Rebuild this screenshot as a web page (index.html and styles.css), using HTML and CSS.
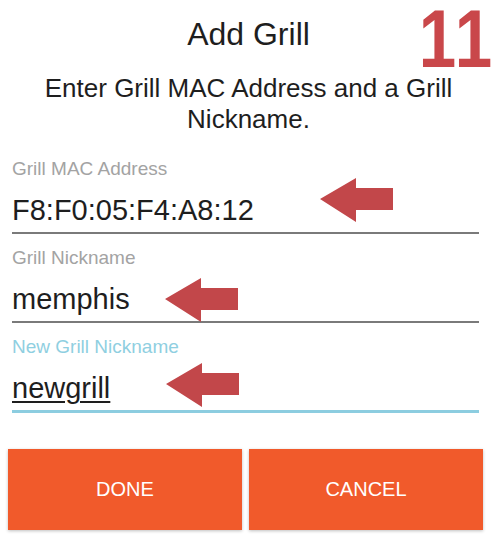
FILE: index.html
```html
<!DOCTYPE html>
<html lang="en">
<head>
    <meta charset="UTF-8">
    <meta name="viewport" content="width=device-width, initial-scale=1.0">
    <title>Add Grill</title>
    <link rel="stylesheet" href="styles.css">
</head>
<body>

    <div class="screen">
        <!-- Step number -->
        <div class="step">11</div>

        <h1 class="title">Add Grill</h1>
        <p class="subtitle">Enter Grill MAC Address and a Grill Nickname.</p>

        <div class="field field-first">
            <div class="label">Grill MAC Address</div>
            <div class="value">F8:F0:05:F4:A8:12</div>
            <svg class="arrow arrow-mac" width="73" height="44" viewBox="0 0 73 44">
                <polygon points="0,21 36,0 36,10 73,10 73,32 36,32 36,44"></polygon>
            </svg>
        </div>

        <div class="field">
            <div class="label">Grill Nickname</div>
            <div class="value">memphis</div>
            <svg class="arrow arrow-nick" width="73" height="44" viewBox="0 0 73 44">
                <polygon points="0,21 36,0 36,10 73,10 73,32 36,32 36,44"></polygon>
            </svg>
        </div>

        <div class="field active">
            <div class="label">New Grill Nickname</div>
            <div class="value"><span class="typed">newgrill</span></div>
            <svg class="arrow arrow-new" width="73" height="44" viewBox="0 0 73 44">
                <polygon points="0,21 36,0 36,10 73,10 73,32 36,32 36,44"></polygon>
            </svg>
        </div>

        <div class="buttons">
            <button class="btn">DONE</button>
            <button class="btn">CANCEL</button>
        </div>
    </div>

</body>
</html>
```

FILE: styles.css
```css
body {
    margin: 0;
    padding: 0;
    background: #fff;
    font-family: 'Liberation Sans', Arial, sans-serif;
    color: #1e1e1e;
}

.screen {
    position: relative;
    width: 497px;
    height: 550px;
    overflow: hidden;
}

/* Big step number in the corner */
.step {
    position: absolute;
    top: 0;
    right: 2px;
    font-size: 82px;
    line-height: 77px;
    font-weight: bold;
    letter-spacing: 3px;
    color: #c9474a;
    transform: scaleX(0.82);
    transform-origin: right top;
}

.title {
    margin: 15px 0 0;
    font-size: 32px;
    line-height: 38px;
    font-weight: normal;
    text-align: center;
}

.subtitle {
    margin: 20px 0 0;
    padding: 0 30px;
    font-size: 26px;
    line-height: 31px;
    text-align: center;
}

/* Input fields */
.field {
    position: relative;
    margin: 13px 18px 0 12px;
    padding-bottom: 4px;
    border-bottom: 2px solid #7a7a7a;
}

.field-first {
    margin-top: 23px;
}

.label {
    font-size: 19px;
    line-height: 22px;
    color: #a3a3a3;
}

.value {
    margin-top: 12px;
    font-size: 29px;
    line-height: 36px;
    color: #1e1e1e;
}

.field.active {
    border-bottom: 3px solid #8ccde0;
}

.field.active .label {
    color: #8fcfe1;
}

.typed {
    text-decoration: underline;
    text-decoration-thickness: 2px;
    text-underline-offset: 3px;
}

/* Red pointer arrows */
.arrow {
    position: absolute;
    fill: #c2474a;
}

.arrow-mac {
    top: 20px;
    left: 308px;
}

.arrow-nick {
    top: 31px;
    left: 153px;
}

.arrow-new {
    top: 27px;
    left: 154px;
}

/* Buttons */
.buttons {
    display: flex;
    gap: 7px;
    margin: 36px 14px 0 8px;
}

.btn {
    flex: 1;
    height: 81px;
    border: none;
    border-radius: 0;
    background: #f15a2b;
    color: #fff;
    font-family: 'Liberation Sans', Arial, sans-serif;
    font-size: 20px;
    box-shadow: 0 1px 3px rgba(0, 0, 0, 0.25);
    cursor: pointer;
}
```
